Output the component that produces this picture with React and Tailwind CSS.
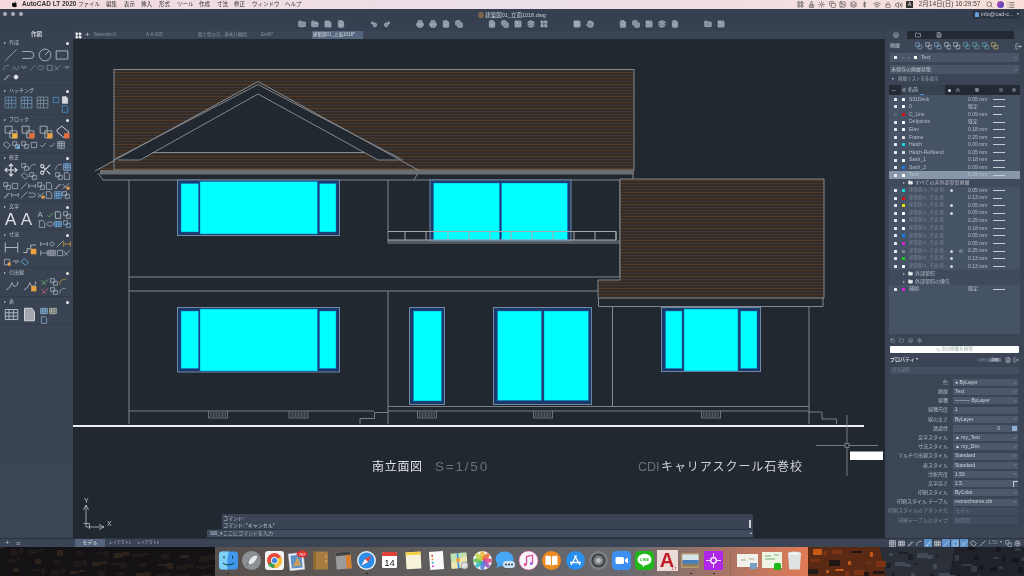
import React from 'react';
import {
  Move, Scissors, Printer, Undo2, Redo2, Folder, FolderOpen, Save, Search, Settings, Wifi, Bluetooth, Volume2, List,
  Grid3x3, LayoutGrid, Hand, Layers, FileText, Image, Stamp, Copy, Lock, ChevronDown, LogOut, Sun,
} from 'lucide-react';

const JP = "'Liberation Sans','Noto Sans CJK JP',sans-serif";

// small palette glyphs, 12x12 box
const GLYPH = {
  line: 'M1 11L11 1',
  pline: 'M1 3h7a3 3 0 0 1 0 6H1',
  circle: 'M6 1a5 5 0 1 0 .01 0M6 6l3-3',
  rect: 'M1 2.5h10v7H1z',
  arc: 'M1 10C1 4 5 2 10 2',
  spline: 'M1 9c2-6 3-6 4-2s3 4 6-4',
  zig: 'M1 6l3-3 2 5 2-5 3 4',
  ell: 'M6 3c3 0 5 1.3 5 3s-2 3-5 3-5-1.3-5-3 2-3 5-3',
  box: 'M2 2h8v8H2z',
  xl: 'M1 10l10-8M1 3l6 7',
  dot: 'M6 3a3 3 0 1 0 .01 0',
  hatch: 'M1 1h10v10H1zM1 4h10M1 7h10M4 1v10M7 1v10',
  dim: 'M1 2v8M11 2v8M1 6h10',
  table: 'M1 2h10v8H1zM1 4.6h10M1 7.3h10M4 2v8M7.5 2v8',
  tag: 'M1 4l4-3 6 5-4 5-6-5z',
  doc: 'M2 1h6l2 3v7H2z',
  copy: 'M1 1h6v6H1zM5 5h6v6H5z',
  leader: 'M1 10c3-1 4-4 5-6M6 4a2.5 2.5 0 1 0 4.5-1',
  check: 'M2 6l3 3 5-6',
  stair: 'M1 10h3V7h3V4h4',
  bar: 'M1 6h10M1 3v6M11 3v6',
};

function G({ k = 'box', s = 8, c = '#aeb7c2', a, fill }) {
  return (
    <svg viewBox="0 0 12 12" width={s} height={s} fill={fill || 'none'} stroke={c} strokeWidth={s > 10 ? 0.8 : 1.1} className="shrink-0">
      <path d={GLYPH[k]} />
      {a && <rect x="7" y="7" width="4.5" height="4.5" fill={a} stroke="none" />}
    </svg>
  );
}

function Section({ title, className, children }) {
  return (
    <div className={`${className} overflow-hidden border-b border-[#343c4a] px-[3px] shrink-0`}>
      <div className="flex items-center h-[8px] mt-[1px]">
        <span className="w-0 h-0 border-y-[1.5px] border-y-transparent border-l-[2px] border-l-[#cccccc] mx-[1px]" />
        <span className="ml-[2px] text-[5px] text-[#b8c0ca] flex-1">{title}</span>
        <span className="w-[3px] h-[3px] rounded-full bg-[#e6e9ee] mr-[1px]" />
      </div>
      {children}
    </div>
  );
}

function LeftPalette() {
  return (
    <div className="w-[73px] shrink-0 bg-gradient-to-b from-[#38414f] to-[#3c4554]">
      <div className="h-[7px] flex items-center justify-center text-[5.5px] text-[#c9cfd7] font-bold">作図</div>
      <Section title="作成" className="h-[48px]">
        <div className="flex justify-between px-[1px] mt-[1px]">
          <G k="line" s={14} c="#8aa4c0" />
          <G k="pline" s={14} />
          <G k="circle" s={14} />
          <G k="rect" s={14} />
        </div>
        <div className="flex justify-between mt-[2px]">
          {['arc', 'spline', 'zig', 'line', 'ell', 'box', 'xl', 'zig'].map((k, i) => <G key={i} k={k} s={7.5} c="#8793a3" />)}
        </div>
        <div className="flex gap-[1px] mt-[1px]">
          <G k="stair" /><G k="dot" c="#e4e7ea" fill="#e4e7ea" />
        </div>
      </Section>
      <Section title="ハッチング" className="h-[29px]">
        <div className="flex items-start gap-[3px] mt-[1px] pl-[1px]">
          <G k="hatch" s={13} c="#5f88a8" /><G k="hatch" s={13} c="#6a92b0" /><G k="hatch" s={13} c="#7c909f" />
          <div className="grid grid-cols-2 gap-[1px]">
            <G k="box" c="#4a9bdc" /><G k="doc" c="#d5d9de" fill="#d5d9de" /><span /><G k="doc" c="#4a9bdc" />
          </div>
        </div>
      </Section>
      <Section title="ブロック" className="h-[38px]">
        <div className="flex justify-between mt-[1px] pl-[1px]">
          <G k="copy" s={14} c="#a8b0b9" a="#f0b040" /><G k="copy" s={14} c="#a8b0b9" a="#e8703a" /><G k="copy" s={14} c="#a8b0b9" a="#e8a040" /><G k="tag" s={14} c="#d4d8dd" a="#e87040" />
        </div>
        <div className="flex gap-[1px] mt-[1.5px]">
          {['tag', 'copy', 'copy', 'box', 'check', 'check', 'hatch'].map((k, i) => <G key={i} k={k} a={i === 1 ? '#6ab0e0' : undefined} />)}
        </div>
      </Section>
      <Section title="修正" className="h-[49px]">
        <div className="flex items-start mt-[1px] pl-[1px] gap-[3px]">
          <Move size={14} strokeWidth={2} className="text-[#e0e3e8] shrink-0" />
          <div className="grid grid-cols-2 gap-[1px] w-[17px]"><G k="copy" /><G k="arc" /><G k="tag" /><G k="copy" /></div>
          <Scissors size={13} className="text-[#dadde2] shrink-0" />
          <div className="grid grid-cols-2 gap-[1px] w-[17px]"><G k="arc" /><G k="hatch" c="#7fb9ea" /><G k="copy" /><G k="doc" /></div>
        </div>
        <div className="flex justify-between mt-[2px]">
          {['copy', 'box', 'line', 'bar', 'copy', 'doc', 'stair', 'xl'].map((k, i) => <G key={i} k={k} s={8} a={i === 7 ? '#e8a040' : undefined} />)}
        </div>
        <div className="flex justify-between mt-[1px]">
          {['stair', 'bar', 'line', 'pline', 'xl', 'doc', 'hatch', 'copy'].map((k, i) => <G key={i} k={k} s={8} a={i === 4 ? '#e8a040' : undefined} c={i === 6 ? '#6db4ea' : '#aeb7c2'} />)}
        </div>
      </Section>
      <Section title="文字" className="h-[28px]">
        <div className="flex items-center pl-[2px]">
          <span className="text-[17px] leading-[16px] text-[#e0e3e8] w-[17px]">A</span>
          <span className="text-[17px] leading-[16px] text-[#d6dae0] w-[17px]">A</span>
          <div className="grid grid-cols-4 gap-[1px] ml-[1px]">
            <span className="text-[8px] leading-[8px] text-[#aeb7c2] w-[8px]">A</span>
            <G k="check" c="#58c060" /><G k="doc" c="#d4d8dd" /><G k="copy" />
            <G k="doc" /><G k="ell" /><G k="table" c="#6db4ea" /><G k="copy" c="#8fb0c8" />
          </div>
        </div>
      </Section>
      <Section title="寸法" className="h-[38px]">
        <div className="flex items-start mt-[1px] pl-[1px] gap-[3px]">
          <G k="dim" s={15} /><G k="stair" s={15} a="#e8a040" />
          <div className="grid grid-cols-4 gap-[1px]">
            <G k="bar" /><G k="dot" /><G k="line" /><G k="dim" c="#e0a040" />
            <G k="dim" /><G k="table" /><G k="box" /><G k="xl" />
          </div>
        </div>
        <div className="flex gap-[1px] mt-[1px]"><G k="box" a="#e8a040" /><G k="zig" /><G k="tag" c="#6db4ea" /></div>
      </Section>
      <Section title="引出線" className="h-[29px]">
        <div className="flex items-start mt-[1px] pl-[2px] gap-[4px]">
          <G k="leader" s={14} /><G k="leader" s={14} a="#e8a040" />
          <div className="grid grid-cols-3 gap-[1px]">
            <G k="xl" c="#66c070" /><G k="copy" /><G k="arc" c="#e0a040" />
            <G k="xl" c="#e06070" /><G k="copy" /><G k="arc" />
          </div>
        </div>
      </Section>
      <Section title="表" className="h-[28px]">
        <div className="flex items-start mt-[1px] pl-[1px] gap-[3px]">
          <G k="table" s={15} />
          <G k="doc" s={15} c="#d0d3d7" fill="#a2a7ae" />
          <div className="grid grid-cols-2 gap-[1px]"><G k="table" c="#8fc4ea" /><G k="table" c="#c8ccb0" /><G k="doc" c="#8fb4d8" /></div>
        </div>
      </Section>
    </div>
  );
}

function MenuBar() {
  const menus = [['ファイル', 'w-[28px]'], ['編集', 'w-[18px]'], ['表示', 'w-[17px]'], ['挿入', 'w-[18px]'], ['形式', 'w-[18px]'], ['ツール', 'w-[22px]'], ['作成', 'w-[18px]'], ['寸法', 'w-[17px]'], ['修正', 'w-[18px]'], ['ウィンドウ', 'w-[33px]'], ['ヘルプ', 'w-[20px]']];
  return (
    <div className="h-[9px] shrink-0 flex items-center bg-gradient-to-r from-[#f4dadd] via-[#eadfe9] to-[#f9dfd8] text-[#333333] text-[5.5px] leading-none">
      <svg viewBox="0 0 12 12" width="7" height="7" className="ml-[7px] w-[15px]"><path d="M8 1c0 1-1 2-2 2 0-1 1-2 2-2zM6 3.4c.6 0 1-.4 2-.4 1 0 1.6.6 2 1.2-1.6 1-1.2 3 .3 3.6-.5 1.4-1.4 3-2.4 3-.7 0-1-.4-1.8-.4s-1.2.4-1.9.4C3 10.8 1.5 8 1.5 6c0-2 1.3-3 2.6-3 .8 0 1.4.4 1.9.4z" fill="#111111" /></svg>
      <span className="font-bold text-[6.5px] w-[56px] whitespace-nowrap">AutoCAD LT 2020</span>
      {menus.map(([m, w]) => <span key={m} className={`${w} whitespace-nowrap`}>{m}</span>)}
      <div className="ml-auto flex items-center gap-[3.5px] pr-[9px] text-[#444444]">
        <LayoutGrid size={7} /><Stamp size={7} /><Sun size={7} /><Copy size={7} /><Image size={7} /><Layers size={7} />
        <Bluetooth size={7} className="ml-[1px]" /><Wifi size={8} className="ml-[1px]" /><Lock size={6} className="ml-[1px]" /><Volume2 size={8} />
        <span className="w-[7px] h-[7px] bg-[#333333] text-white text-[5px] flex items-center justify-center">A</span>
        <span className="text-[6.5px] ml-[2px] mr-[2px] whitespace-nowrap">2月14日(日) 16:29:57</span>
        <Search size={7} /><span className="w-[7px] h-[7px] rounded-full bg-gradient-to-br from-[#c040b0] to-[#3040c0]" /><List size={8} />
      </div>
    </div>
  );
}

function TitleBar() {
  const groups = [
    [<Folder key="a" />, <FolderOpen key="b" />, <Save key="c" />, <FileText key="d" />],
    [<Undo2 key="a" />, <Redo2 key="b" />],
    [<Printer key="a" />, <Printer key="b" />, <FileText key="c" />, <Copy key="d" />],
    [<FileText key="a" />, <Copy key="b" />, <Image key="c" />, <Layers key="d" />, <LayoutGrid key="e" />],
    [<Grid3x3 key="a" />, <Hand key="b" />],
    [<FileText key="a" />, <Copy key="b" />, <Image key="c" />, <Layers key="d" />, <FileText key="e" />],
    [<Folder key="a" />, <Image key="b" />],
  ];
  return (
    <div className="h-[22px] shrink-0 bg-[#364050]">
      <div className="h-[10px] grid grid-cols-3 items-center">
        <div className="flex gap-[4px] pl-[3px]">
          <span className="w-[4px] h-[4px] rounded-full bg-[#aab0ba]" /><span className="w-[4px] h-[4px] rounded-full bg-[#aab0ba]" /><span className="w-[4px] h-[4px] rounded-full bg-[#aab0ba]" />
        </div>
        <div className="flex items-center justify-center gap-[1px] text-[5.5px] text-[#c6ccd5] whitespace-nowrap pt-[2px]">
          <FileText size={6} className="text-[#e0a040]" />建築図01_立面1018.dwg
        </div>
        <div className="flex justify-end pr-[4px]">
          <div className="w-[48px] h-[9px] bg-[#2c3542] rounded-[1px] flex items-center text-[5.5px] text-[#c6ccd5] pl-[3px] gap-[2px] whitespace-nowrap">
            <span className="w-[4px] h-[5px] bg-[#6aa0dc] rounded-t-full" />info@cad-c...<span className="text-[4px] ml-auto mr-[1px]">▾</span>
          </div>
        </div>
      </div>
      <div className="flex gap-[25px] pl-[298px] pt-[0.5px] text-[#b4bcc6]">
        {groups.map((g, i) => (
          <div key={i} className="flex gap-[5px]">
            {g.map((ic, j) => <span key={j} className="w-[8px] h-[8px] [&>svg]:w-[8px] [&>svg]:h-[8px] [&>svg]:fill-[#7f90a2]">{ic}</span>)}
          </div>
        ))}
      </div>
    </div>
  );
}

function Tabs() {
  const tabs = [['Samonin-0', 'w-[52px]'], ['A-A-005', 'w-[52px]'], ['膝と型の方...基本計画図', 'w-[63px]'], ['Ex40*', 'w-[51px]']];
  return (
    <div className="h-[8px] shrink-0 bg-[#3a4454] flex items-center text-[4.5px] text-[#8a95a3] whitespace-nowrap">
      <LayoutGrid size={7} className="ml-[2px] text-[#e6e9ee] fill-[#e6e9ee] shrink-0" />
      <span className="text-[8px] leading-none text-[#c6ccd5] ml-[3px] w-[9px] font-light">+</span>
      {tabs.map(([t, w]) => <span key={t} className={w}>{t}</span>)}
      <span className="h-full w-[51px] bg-[#55657e] text-[#d4d9e0] flex items-center pl-[1px]">建築図01_立面1018*</span>
    </div>
  );
}

function Win({ x, y, w, h, panes }) {
  return (
    <g>
      <rect x={x} y={y} width={w} height={h} fill="#1c3a68" stroke="#6f88a6" strokeWidth="1" />
      {panes.map(([a, b, c, d], i) => (
        <rect key={i} x={a} y={b} width={c - a} height={d - b} fill="#00ffff" stroke="#1a6fc4" strokeWidth="0.5" />
      ))}
    </g>
  );
}

function Vent({ x }) {
  const bars = Array.from({ length: 11 }, (_, i) => x + 2 + i * 1.5);
  return (
    <g stroke="#83878c" strokeWidth="0.5">
      <path d={`M${x} 411v7h19v-7`} fill="none" strokeWidth="0.8" />
      {bars.map((b) => <path key={b} d={`M${b} 412v5`} />)}
    </g>
  );
}

function Drawing() {
  const posts = [405, 426, 448, 469, 490, 511, 532, 553, 574, 595, 616];
  return (
    <svg viewBox="73 39 812 499" className="w-full h-full block">
      <defs>
        <pattern id="roof" width="4" height="12" patternUnits="userSpaceOnUse">
          <rect width="4" height="12" fill="#322d2b" />
          <rect y="0" width="4" height="0.8" fill="#5e3d1e" />
          <rect y="3" width="4" height="0.8" fill="#463a2f" />
          <rect y="6" width="4" height="0.8" fill="#553a20" />
          <rect y="9" width="4" height="0.8" fill="#433a32" />
        </pattern>
      </defs>
      <g fill="none" stroke="#85888c" strokeWidth="1">
        {/* main roof */}
        <rect x="114" y="69.5" width="520" height="100.5" fill="url(#roof)" />
        <path d="M95 171L113 160V170H95z" fill="url(#roof)" stroke="none" />
        <polygon points="113,160 258,83 403,160 378,160 258,94 140,160" fill="#212830" stroke="none" />
        <polygon points="152,152.5 258,94 365,152.5" fill="#212830" stroke="none" />
        <rect x="100" y="170" width="534" height="4.5" fill="#6b6d70" stroke="none" />
        <path d="M95 171L258 81.5L420 171" />
        <path d="M113 160L258 84.5L403 160" />
        <path d="M118 160H140L258 94L378 160H399" />
        <path d="M152 152.5H365" />
        <path d="M98 173L103 180H633V174M418 173L414 180" />

        {/* walls */}
        <path d="M129 180V424M388 180V243M388 291V424M620 180V277M612.5 306V407M809 306V424" />
        <path d="M129 277H620M129 291H598" />
        <path d="M388 243H620M388 241H620" />

        {/* side roof */}
        <polygon points="620,179 824,179 824,298 598,298 598,280 620,280" fill="url(#roof)" />
        <path d="M598.5 298V306.5H823V298" />
      </g>

      <Win x={177.5} y={180} w={162} h={55.5} panes={[[181, 183.5, 198.5, 232], [200, 181.5, 317.5, 234], [319.5, 183.5, 336, 232]]} />
      <Win x={430} y={180} w={141} h={61} panes={[[433.5, 183, 499.5, 240], [501.5, 183, 567.5, 240]]} />
      <Win x={177.5} y={307.5} w={162} h={64.5} panes={[[181, 311, 198.5, 368.5], [200, 309, 317.5, 371], [319.5, 311, 336, 368.5]]} />
      <Win x={409.5} y={307.5} w={35} h={97} panes={[[413.5, 311, 441.5, 401]]} />
      <Win x={493.5} y={307.5} w={98} h={97} panes={[[497.5, 311, 541.5, 400.5], [544, 311, 588.5, 400.5]]} />
      <Win x={661.5} y={307.5} w={99} h={64} panes={[[665.5, 311, 682, 368.5], [684, 309, 738, 371], [740.5, 311, 757, 368.5]]} />

      <g fill="none" stroke="#a6a9ad" strokeWidth="1">
        <path d="M388 231.5H616V240H388" />
        {posts.map((x) => <path key={x} d={`M${x} 231.5V240`} />)}
      </g>
      <g fill="none" stroke="#85888c" strokeWidth="0.9">
        <path d="M388 406.5H809M129 411H374M388 411H809" />
        <path d="M360 424V418.5H374.5V412.5H388" />
        <path d="M808.5 412H822V419H836.5V424" />
      </g>
      {[208.5, 289, 417.5, 533.5, 701.5].map((x) => <Vent key={x} x={x} />)}
      <path d="M73 426H864" stroke="#eceef0" strokeWidth="2" />

      <text x="372" y="471" fontFamily={JP} fontSize="12" letterSpacing="0.7" fill="#dfe2e5">南立面図</text>
      <text x="435" y="471" fontFamily="'Liberation Sans',sans-serif" fontSize="13.5" letterSpacing="1.8" fill="#6d7278">S=1/50</text>
      <text x="638" y="471" fontFamily="'Liberation Sans',sans-serif" fontSize="12.5" fill="#6d7278">CDI</text>
      <text x="661" y="471" fontFamily={JP} fontSize="12" letterSpacing="0.9" fill="#cfd2d5">キャリアスクール石巻校</text>

      {/* crosshair */}
      <g stroke="#8c9096" strokeWidth="0.8" fill="none">
        <path d="M816 445.5H845M849 445.5H878M847 415V443.5M847 447.5V476" />
        <rect x="845" y="443.5" width="4" height="4" />
      </g>
      <rect x="850" y="451.5" width="33" height="8.5" fill="#ffffff" />

      {/* ucs */}
      <g stroke="#b8bcc0" strokeWidth="0.8" fill="none">
        <path d="M86 527V505M83.5 510L86 505L88.5 510M86 527H104M99 524.5L104 527L99 529.5M83.5 523.5H89.5V529" />
      </g>
      <text x="84" y="503" fontFamily="'Liberation Sans',sans-serif" fontSize="7" fill="#c4c8cc">Y</text>
      <text x="107" y="526" fontFamily="'Liberation Sans',sans-serif" fontSize="7" fill="#c4c8cc">X</text>
    </svg>
  );
}

function CommandLine() {
  return (
    <div className="absolute left-[134px] bottom-0 w-[546px] h-[24px] flex flex-col text-[5px] text-[#c3c9d2]">
      <div className="ml-[15px] h-[14.5px] bg-[#3a4454] pl-[1px] leading-[7px] relative pt-[1px]">
        <div>コマンド:</div>
        <div>コマンド: *キャンセル*</div>
        <span className="absolute right-[2px] top-[6px] w-[2px] h-[8px] bg-[#c9ced5]" />
      </div>
      <div className="flex-1 flex items-center bg-[#414c5e] border-y border-[#2b333f]">
        <span className="w-[15px] text-[#aab2bd] pl-[3px]">⌨_▾</span>
        <span className="text-[#aab2bd] pl-[1px]">ここにコマンドを入力</span>
        <span className="ml-auto mr-[1px] text-[4px]">▴</span>
      </div>
    </div>
  );
}

const SWATCH = { w: 'bg-white', g: 'bg-[#dddddd]', d: 'bg-[#888888]', r: 'bg-[#e01010]', c: 'bg-[#10e0e0]', b: 'bg-[#1080f0]', y: 'bg-[#f0e010]', m: 'bg-[#e020e0]', l: 'bg-[#10d010]' };
const XREF = '建築図01_平面-断...';

const LAYERS = [
  { n: 'S31Deck', c: 'w', t: '0.05 mm' }, { n: '0', c: 'w', t: '既定' },
  { n: 'C_Line', c: 'r', t: '0.09 mm', short: true, off: true }, { n: 'Defpoints', c: 'w', t: '既定' },
  { n: 'Elev', c: 'w', t: '0.18 mm' }, { n: 'Frame', c: 'g', t: '0.25 mm' },
  { n: 'Hatch', c: 'c', t: '0.00 mm' }, { n: 'Hatch-Refblend', c: 'g', t: '0.05 mm' },
  { n: 'Sash_1', c: 'w', t: '0.18 mm' }, { n: 'Sash_2', c: 'b', t: '0.09 mm' },
  { n: 'Text', c: 'w', t: '0.09 mm', sel: true },
  { g: 'すべての非外部参照画層' },
  { n: XREF, c: 'c', t: '0.05 mm', x: true, f: true },
  { n: XREF, c: 'r', t: '0.13 mm', short: true, x: true },
  { n: XREF, c: 'y', t: '0.05 mm', x: true, f: true },
  { n: XREF, c: 'w', t: '0.05 mm', x: true, f: true },
  { n: XREF, c: 'w', t: '0.25 mm', x: true },
  { n: XREF, c: 'w', t: '0.18 mm', x: true },
  { n: XREF, c: 'b', t: '0.05 mm', x: true },
  { n: XREF, c: 'm', t: '0.05 mm', x: true },
  { n: XREF, c: 'd', t: '0.25 mm', x: true, f: true, k: true },
  { n: XREF, c: 'l', t: '0.13 mm', x: true, f: true },
  { n: XREF, c: 'w', t: '0.13 mm', x: true, f: true },
  { g: '外部参照' }, { g: '外部参照の優先' },
  { n: '補助', c: 'm', t: '既定' },
];

function LayerRow({ r }) {
  if (r.g) {
    return (
      <div className="h-[7.6px] flex items-center bg-[#3f4a5c] text-[5px] text-[#b4bcc7] whitespace-nowrap">
        <span className="ml-[14px] w-[3px] text-[4px]">▸</span>
        <Folder size={5} className="ml-[2px] mr-[2px] text-[#e6e9ee] fill-[#e6e9ee]" />{r.g}
      </div>
    );
  }
  return (
    <div className={`h-[7.6px] flex items-center whitespace-nowrap ${r.sel ? 'bg-[#8797a9]' : ''} ${r.x ? 'text-[#758092] text-[4.4px]' : 'text-[#b7bfca] text-[5px]'}`}>
      <span className={`ml-[5px] w-[3px] h-[3px] rounded-[0.5px] ${r.off ? 'bg-[#5a6678]' : 'bg-[#e6e9ee]'}`} />
      <span className={`ml-[5px] w-[3px] h-[3px] rounded-[0.5px] ${SWATCH[r.c]}`} />
      <span className="ml-[4px] w-[41px]">{r.n}</span>
      <span className="w-[9px] flex">{r.f && <span className="w-[3px] h-[3px] rounded-full bg-[#ccd3dc]" />}</span>
      <span className="w-[9px] flex">{r.k && <Lock size={4} className="text-[#ccd3dc]" />}</span>
      <span className="w-[20px] text-[#b7bfca] text-[5px]">{r.t}</span>
      <span className={`h-[1px] bg-[#c7cdd5] ml-[5px] ${r.short ? 'w-[9px]' : 'w-[12px]'}`} />
    </div>
  );
}

function LayerPanel() {
  const sel = 'h-[9px] mx-[5px] bg-[#4a5567] flex items-center text-[5px] text-[#c3c9d2] relative';
  return (
    <div className="h-[313px] shrink-0 flex flex-col">
      <div className="h-[8px] flex bg-[#232a33]">
        <div className="w-[22px] bg-[#3b4556] flex items-center justify-center"><Layers size={6} className="text-[#d7dce2]" /></div>
        <div className="w-[21px] flex items-center justify-center"><Folder size={6} className="text-[#d7dce2]" /></div>
        <div className="w-[21px] flex items-center justify-center"><FileText size={6} className="text-[#d7dce2]" /></div>
        <div className="ml-auto w-[10px] bg-[#3b4556]" />
      </div>
      <div className="h-[14px] flex items-center text-[5px] text-[#c9cfd7] pl-[5px]">
        <span className="w-[25px]">画層</span>
        <div className="flex gap-[2px]">
          {['#7ea8c8', '#b4bcc4', '#7ea8c8', '#b4bcc4', '#b4bcc4', '#68a4b8', '#68a4b8', '#68a4b8', '#c4b070'].map((c, i) => <G key={i} k="copy" c={c} s={7.5} />)}
        </div>
        <LogOut size={7} className="ml-auto mr-[2px] text-[#d7dce2]" />
      </div>
      <div className={sel}>
        <span className="w-[3px] h-[3px] bg-[#e6e9ee] ml-[4px]" />
        <span className="w-[2px] h-[2px] bg-[#666677] ml-[5px]" /><span className="w-[2px] h-[2px] bg-[#666677] ml-[4px]" />
        <span className="w-[3px] h-[3px] bg-white ml-[4px] mr-[4px]" />Text<ChevronDown size={4} className="absolute right-[1px]" />
      </div>
      <div className={`${sel} mt-[3px] text-[#aab2bd]`}>
        <span className="pl-[1px]">未保存の画層状態</span><ChevronDown size={4} className="absolute right-[1px]" />
      </div>
      <div className="h-[11px] flex items-center pl-[7px] text-[4.5px] text-[#98a2af] gap-[3px]">▸<span>画層リストを非表示</span></div>
      <div className="mx-[4px] h-[10px] bg-[#232a33] flex items-center text-[5px] text-[#c9cfd7]">
        <span className="w-[12px] pl-[2px] text-[6px] leading-none">⇔</span>
        <div className="w-[44px] h-full bg-[#374150] flex items-center pl-[1px] gap-[2px] relative">
          <FileText size={4} />名前<span className="absolute bottom-0 left-[19px] w-[4px] h-[1px] bg-[#3b8fe0]" />
        </div>
        <span className="ml-[3px] w-[3px] h-[3px] rounded-full bg-[#d7dce2]" />
        <Lock size={4} className="ml-[5px]" />
        <Grid3x3 size={4} className="ml-[15px]" />
        <Grid3x3 size={4} className="ml-[20px] text-[#7e8895]" />
        <FileText size={4} className="ml-[9px]" />
      </div>
      <div className="mx-[4px] flex-1 bg-[#465265] pt-[0.5px]">
        {LAYERS.map((r, i) => <LayerRow key={i} r={r} />)}
      </div>
      <div className="h-[10px] flex items-center text-[#aeb6c1] pl-[5px] gap-[4px] pt-[3px]">
        <Copy size={5} /><Folder size={5} /><Layers size={5} /><Settings size={5} />
      </div>
    </div>
  );
}

const PROPS = [
  ['色', '● ByLayer', 1], ['画層', 'Text', 1], ['線種', '——— ByLayer', 1], ['線種尺度', '1', 0], ['線の太さ', 'ByLayer', 1],
  ['透過性', '0', 2], ['文字スタイル', '▲ my_Text', 1], ['寸法スタイル', '▲ my_Dim', 1], ['マルチ引出線スタイル', 'Standard', 1], ['表スタイル', 'Standard', 1],
  ['注釈尺度', '1:50', 1], ['文字高さ', '1.5', 3], ['印刷スタイル', 'ByColor', 1], ['印刷スタイル テーブル', 'monochrome.ctb', 1], ['印刷スタイルのアタッチ先', 'モデル', 4], ['印刷テーブルのタイプ', '利用可', 4],
];

function PropsPanel() {
  return (
    <div className="flex-1 flex flex-col">
      <div className="mx-[5px] h-[7px] mt-[2px] bg-white rounded-[1px] flex items-center justify-center text-[4.5px] text-[#99aaaa] gap-[1px]">
        <Search size={4} />次の画層を検索
      </div>
      <div className="h-[14px] flex items-center px-[5px] text-[5px] text-[#d2d7de] font-bold">
        プロパティ<span className="ml-[1px] text-[3.5px]">▾</span>
        <span className="ml-auto h-[4px] w-[12px] bg-[#4a5567] text-[3.5px] leading-[4px] font-normal text-center text-[#8a94a2]">ｶﾗｰ</span>
        <span className="h-[4px] w-[12px] bg-[#667389] text-[3.5px] leading-[4px] font-normal text-center">詳細</span>
        <FileText size={6} className="ml-[4px]" /><LogOut size={6} className="ml-[2px]" />
      </div>
      <div className="mx-[5px] h-[7px] bg-[#444f61] flex items-center text-[4.5px] text-[#6f7a88] pl-[2px]">何も選択<ChevronDown size={4} className="ml-auto" /></div>
      <div className="mt-[4px]">
        {PROPS.map(([k, v, t]) => (
          <div key={k} className="h-[9.2px] flex items-center text-[5px] whitespace-nowrap">
            <span className={`w-[63px] text-right ${t === 4 ? 'text-[#7e8997]' : 'text-[#aeb6c1]'}`}>{k}</span>
            <div className={`ml-[5px] w-[65px] h-[7px] flex items-center pl-[2px] ${t === 4 ? 'bg-[#414c5e] text-[#6f7a88]' : 'bg-[#4c586b] text-[#d2d7de]'}`}>
              {t === 2 ? <span className="ml-auto mr-[12px]">{v}</span> : v}
              {t === 1 && <ChevronDown size={4} className="ml-auto mr-[1px]" />}
              {t === 2 && <span className="w-[5px] h-[5px] bg-[#8fb0d0] mr-[1px]" />}
              {t === 3 && <span className="ml-auto w-[5px] h-[6px] border-l border-t border-[#c9ced5]" />}
            </div>
          </div>
        ))}
      </div>
    </div>
  );
}

function StatusBar() {
  const icons = [
    ['hatch', 0], ['table', 0], ['stair', 0], ['arc', 0], ['stair', 1], ['table', 0], ['line', 1], ['box', 1], ['xl', 1], ['tag', 0], ['line', 0],
  ];
  return (
    <div className="h-[9px] shrink-0 bg-[#3a4454] border-t border-[#2b333f] flex items-center text-[4px] text-[#aeb6c1] whitespace-nowrap">
      <span className="w-[15px] pl-[5px] text-[8px] leading-none font-light">+</span>
      <span className="w-[60px] text-[7px] leading-none pl-[1px]">≡</span>
      <span className="w-[30px] h-full bg-[#55647c] text-[#dde1e6] flex items-center justify-center text-[5px]">モデル</span>
      <span className="ml-[2px] w-[26px] text-center">レイアウト1</span>
      <span className="ml-[2px] w-[26px] text-center">レイアウト2</span>
      <div className="ml-auto pr-[3px] flex items-center gap-[1px] shrink-0">
        {icons.map(([k, on], i) => (
          <span key={i} className={`w-[8px] h-[8px] flex items-center justify-center ${on ? 'bg-[#5d93cc]' : ''}`}><G k={k} s={7} c="#d6dae0" /></span>
        ))}
        <span className="w-[12px] text-center text-[#8b95a2] text-[5px]">1:50</span><span className="text-[3.5px] w-[4px]">▾</span>
        <span className="w-[7px]"><G k="copy" s={7} /></span>
        <Settings size={7} className="ml-[1px] text-[#e6e9ee]" />
      </div>
    </div>
  );
}

const Frame = ({ children }) => <svg viewBox="0 0 21 21" width="21" height="21" className="block">{children}</svg>;

const DOCK = [
  { dot: 1, svg: <Frame><rect x="1" y="1.5" width="19" height="18" rx="3" fill="#3f96ea" /><path d="M1 4.5a3 3 0 0 1 3-3h7c-1.5 4-2 8-1.5 18H4a3 3 0 0 1-3-3z" fill="#7fd0f7" /><path d="M6 6v2.5M14.5 6v2.5M5 13c3 2.5 8 2.5 11 0" stroke="#113333" fill="none" /></Frame> },
  { svg: <Frame><circle cx="10.5" cy="10.5" r="9.5" fill="#8c9096" /><path d="M15 5c-4 .5-7 4-8 8l2 2c4-1 7-5 8-9zM7 13l-2 3" fill="#e4e6ea" stroke="#555555" strokeWidth=".5" /></Frame> },
  { dot: 1, svg: <Frame><rect x="1" y="1" width="19" height="19" rx="3" fill="#f4f4f4" /><circle cx="10.5" cy="10.5" r="7.5" fill="#e24a3c" /><path d="M10.5 10.5L4 14.2A7.5 7.5 0 0 0 10.5 18z" fill="#3aa655" /><path d="M10.5 10.5V18A7.5 7.5 0 0 0 17 6.7z" fill="#f5c43a" /><circle cx="10.5" cy="10.5" r="3.2" fill="#3a86e0" stroke="#ffffff" /></Frame> },
  { dot: 1, svg: <Frame><g transform="rotate(-6 10 11)"><rect x="2" y="3" width="15" height="17" fill="#eef2f6" stroke="#aaaabb" strokeWidth=".5" /><rect x="4" y="5" width="11" height="13" fill="#5a8fc8" /><path d="M5 16l6-9 3 9z" fill="#c6a060" /></g><ellipse cx="15" cy="4" rx="5.5" ry="3.5" fill="#e03030" /><text x="15" y="5.5" fontSize="4" fill="#ffffff" textAnchor="middle" fontFamily="Liberation Sans">767</text></Frame> },
  { svg: <Frame><rect x="3" y="1.5" width="15" height="18" rx="1.5" fill="#a87c40" /><rect x="3" y="1.5" width="3" height="18" fill="#8f6830" /><path d="M16 5v3M16 10v3" stroke="#d8b070" /></Frame> },
  { svg: <Frame><g transform="rotate(-5 10 10)"><rect x="3" y="2" width="15" height="17" fill="#9c9c9c" /><rect x="3" y="2" width="15" height="3.5" fill="#444444" /><rect x="13" y="5.5" width="5" height="13.5" fill="#d98030" /></g></Frame> },
  { dot: 1, svg: <Frame><circle cx="10.5" cy="10.5" r="9.5" fill="#e8edf2" /><circle cx="10.5" cy="10.5" r="8" fill="#2f8fe8" /><path d="M15.5 5.5L9 9l-3.5 6.5L12 12z" fill="#f04030" /><path d="M9 9l-3.5 6.5L12 12z" fill="#ffffff" /></Frame> },
  { svg: <Frame><rect x="3" y="2" width="15" height="16" rx="1.5" fill="#ffffff" /><path d="M3 3.5A1.5 1.5 0 0 1 4.5 2h12A1.5 1.5 0 0 1 18 3.5V6H3z" fill="#e04038" /><text x="10.5" y="15.5" fontSize="9.5" fontFamily="Liberation Sans" textAnchor="middle" fill="#222222">14</text></Frame> },
  { svg: <Frame><g transform="rotate(-3 10 10)"><rect x="3" y="2" width="15" height="17" rx="1" fill="#f6f2d8" /><rect x="3" y="2" width="15" height="3" fill="#f4d040" /></g></Frame> },
  { svg: <Frame><g transform="rotate(-4 10 10)"><rect x="3.5" y="1.5" width="14" height="18" fill="#fafafa" /><circle cx="6.5" cy="5.5" r="1" fill="#e04040" /><circle cx="6.5" cy="9" r="1" fill="#f0a030" /><circle cx="6.5" cy="12.5" r="1" fill="#40a0e0" /><circle cx="6.5" cy="16" r="1" fill="#c050d0" /></g></Frame> },
  { svg: <Frame><g transform="rotate(-5 10 10)"><rect x="2" y="3" width="16" height="15" fill="#bfe0b0" /><path d="M2 12l16-6v5L8 18H2z" fill="#efe3b0" /><path d="M9 3v15" stroke="#3090e0" strokeWidth="1.5" /><circle cx="9" cy="10" r="2" fill="#f0a030" /></g><circle cx="15.5" cy="15.5" r="3.5" fill="#dddddd" stroke="#888888" strokeWidth=".6" /></Frame> },
  { svg: <Frame><circle cx="10.5" cy="10.5" r="9.5" fill="#f4f4f4" />{['#f0b030', '#e86a30', '#e0407a', '#a050c0', '#4a78d8', '#30b0c0', '#60c050', '#c0d040'].map((c, i) => <ellipse key={c} cx="10.5" cy="5.5" rx="2.3" ry="4.5" fill={c} opacity=".85" transform={`rotate(${i * 45} 10.5 10.5)`} />)}</Frame> },
  { dot: 1, svg: <Frame><ellipse cx="9.5" cy="9" rx="9" ry="7.5" fill="#46a8f5" /><path d="M3 13l-1.5 5 6-3z" fill="#46a8f5" /><rect x="8" y="11" width="12" height="7" rx="3.5" fill="#c8e2f7" /><circle cx="11" cy="14.5" r=".9" fill="#333333" /><circle cx="14" cy="14.5" r=".9" fill="#333333" /><circle cx="17" cy="14.5" r=".9" fill="#333333" /></Frame> },
  { svg: <Frame><circle cx="10.5" cy="10.5" r="9.5" fill="#f6f6f8" stroke="#e060b0" strokeWidth=".6" /><path d="M8.5 14V6.5l6-1.3V13" fill="none" stroke="#e84a98" strokeWidth="1.3" /><circle cx="7.3" cy="14.5" r="1.5" fill="#e84a98" /><circle cx="13.3" cy="13.5" r="1.5" fill="#a060e0" /></Frame> },
  { svg: <Frame><circle cx="10.5" cy="10.5" r="9.5" fill="#ec8a20" /><path d="M4.5 6c2.5-.5 4.5 0 6 1 1.5-1 3.5-1.5 6-1v9c-2.5-.5-4.5 0-6 1-1.5-1-3.5-1.5-6-1z" fill="#ffffff" /><path d="M10.5 7v9" stroke="#ec8a20" /></Frame> },
  { svg: <Frame><circle cx="10.5" cy="10.5" r="9.5" fill="#2a90ee" /><path d="M6 15l5.5-9.5M15 15L9.5 5.5M5 12.5h11" stroke="#ffffff" strokeWidth="1.3" fill="none" /></Frame> },
  { svg: <Frame><circle cx="10.5" cy="10.5" r="9.5" fill="#7b7f84" /><circle cx="10.5" cy="10.5" r="6" fill="none" stroke="#3c3f44" strokeWidth="2" /><circle cx="10.5" cy="10.5" r="2.5" fill="#b8bcc0" /></Frame> },
  { dot: 1, svg: <Frame><rect x="1" y="1" width="19" height="19" rx="4.5" fill="#3d8ff0" /><rect x="4.5" y="7" width="8.5" height="7" rx="1.5" fill="#ffffff" /><path d="M14 9.5l3-2v6l-3-2z" fill="#ffffff" /></Frame> },
  { dot: 1, svg: <Frame><rect x="1" y="1" width="19" height="19" rx="4.5" fill="#20b818" /><ellipse cx="10.5" cy="9.5" rx="7" ry="5.8" fill="#ffffff" /><path d="M8 14l1 3 3-3z" fill="#ffffff" /><text x="10.5" y="11" fontSize="4" fontWeight="bold" fontFamily="Liberation Sans" textAnchor="middle" fill="#20b818">LINE</text></Frame> },
  { dot: 1, svg: <Frame><rect x="0" y="0" width="21" height="21" fill="#ecdcd8" /><text x="10" y="17" fontSize="20" fontWeight="bold" fontFamily="Liberation Sans" textAnchor="middle" fill="#c01c28">A</text><text x="17.5" y="20" fontSize="4" fontFamily="Liberation Sans" textAnchor="middle" fill="#c01c28">LT</text></Frame> },
  { dot: 1, svg: <Frame><rect x="1" y="3" width="18" height="15" fill="#b89a70" /><rect x="2.5" y="4.5" width="16" height="6" fill="#d8e4ee" /><rect x="2.5" y="10" width="16" height="4" fill="#4a80b8" /><rect x="2.5" y="14" width="16" height="2.5" fill="#907a58" /></Frame> },
  { dot: 1, svg: <Frame><rect x="1" y="1" width="19" height="19" fill="#b026e8" /><path d="M10.5 3v15M3 10.5h15" stroke="#f0e0ff" strokeWidth="1" /><circle cx="10.5" cy="10.5" r="2.8" fill="#b026e8" stroke="#ffffff" strokeWidth="1.3" /></Frame> },
];

const DOCS = [
  <Frame key="a"><rect x="0" y="4" width="21" height="13" fill="#f2f0ea" /><path d="M4 10h5M12 9h5" stroke="#b0a890" /><rect x="13" y="13" width="7" height="6" fill="#7aa0c8" /></Frame>,
  <Frame key="b"><rect x="1" y="2" width="20" height="16" fill="#eef4e4" /><path d="M4 6h6M4 9h10M13 5h5" stroke="#78b078" /><rect x="13" y="13" width="7" height="7" rx="1.5" fill="#20b818" /></Frame>,
  <Frame key="c"><path d="M4 3h13l-1.2 16.5H5.2z" fill="#dfe3e4" /><ellipse cx="10.5" cy="3.5" rx="6.5" ry="1.8" fill="#f3f5f5" stroke="#bbcccc" strokeWidth=".4" /></Frame>,
];

function Dock() {
  const slot = (d, i) => (
    <div key={i} className="w-[21px] shrink-0 flex flex-col items-center">
      {d.svg}
      <span className={`w-[1.5px] h-[1.5px] mt-[1.5px] rounded-full ${d.dot ? 'bg-[#1a1a1a]' : 'bg-transparent'}`} />
    </div>
  );
  return (
    <div className="ml-[215px] w-[593px] h-full pt-[3px] pl-[2.5px] flex gap-[2.15px] bg-gradient-to-r from-[#57504c] via-[#6a6a70] via-70% to-[#e07a56] relative">
      {DOCK.map(slot)}
      <span className="w-[1px] h-[24px] mx-[3.85px] bg-[#8a6a5c] shrink-0" />
      {DOCS.map((s, i) => slot({ svg: s }, `d${i}`))}
    </div>
  );
}

// mottled rock on the desktop picture behind the dock
const SPECKS = Array.from({ length: 240 }, (_, i) => {
  const x = (i * 397) % 1024;
  const y = (i * 131) % 29;
  const w = 3 + (i * 7) % 9;
  let fill = i % 3 ? '#201a18' : '#2e221d';
  if (x > 808 && x < 880) fill = i % 3 === 0 ? '#c85a18' : i % 3 === 1 ? '#7a3414' : '#1f1512';
  else if (x >= 880 && x < 955) fill = i % 2 ? '#414a56' : '#1c2027';
  else if (x >= 955) fill = i % 2 ? '#343a43' : '#14161b';
  return { x, y, w, h: 2 + (i * 3) % 5, fill };
});

function Wallpaper() {
  return (
    <svg viewBox="0 0 1024 29" preserveAspectRatio="none" className="absolute inset-0 w-full h-full">
      <rect width="1024" height="29" fill="#141214" />
      <path d="M808 0h72l6 29H808z" fill="#5a2a14" />
      <path d="M880 0h75l-5 29h-64z" fill="#2a2f38" />
      <path d="M955 0h69v29h-74z" fill="#1f2229" />
      {SPECKS.map((s, i) => <rect key={i} x={s.x} y={s.y} width={s.w} height={s.h} rx="1" fill={s.fill} />)}
    </svg>
  );
}

export default function App() {
  return (
    <div className="w-[1024px] h-[576px] overflow-hidden flex flex-col bg-[#1b1b1e] blur-[0.3px] [font-family:'Liberation_Sans','Noto_Sans_CJK_JP',sans-serif]">
      <MenuBar />
      <TitleBar />
      <div className="h-[507px] shrink-0 flex">
        <LeftPalette />
        <div className="w-[812px] shrink-0 flex flex-col">
          <Tabs />
          <div className="flex-1 bg-[#212830] relative">
            <Drawing />
            <CommandLine />
          </div>
        </div>
        <div className="w-[139px] shrink-0 bg-[#3b4556] flex flex-col">
          <LayerPanel />
          <PropsPanel />
        </div>
      </div>
      <StatusBar />
      <div className="relative flex-1">
        <Wallpaper />
        <Dock />
      </div>
    </div>
  );
}
